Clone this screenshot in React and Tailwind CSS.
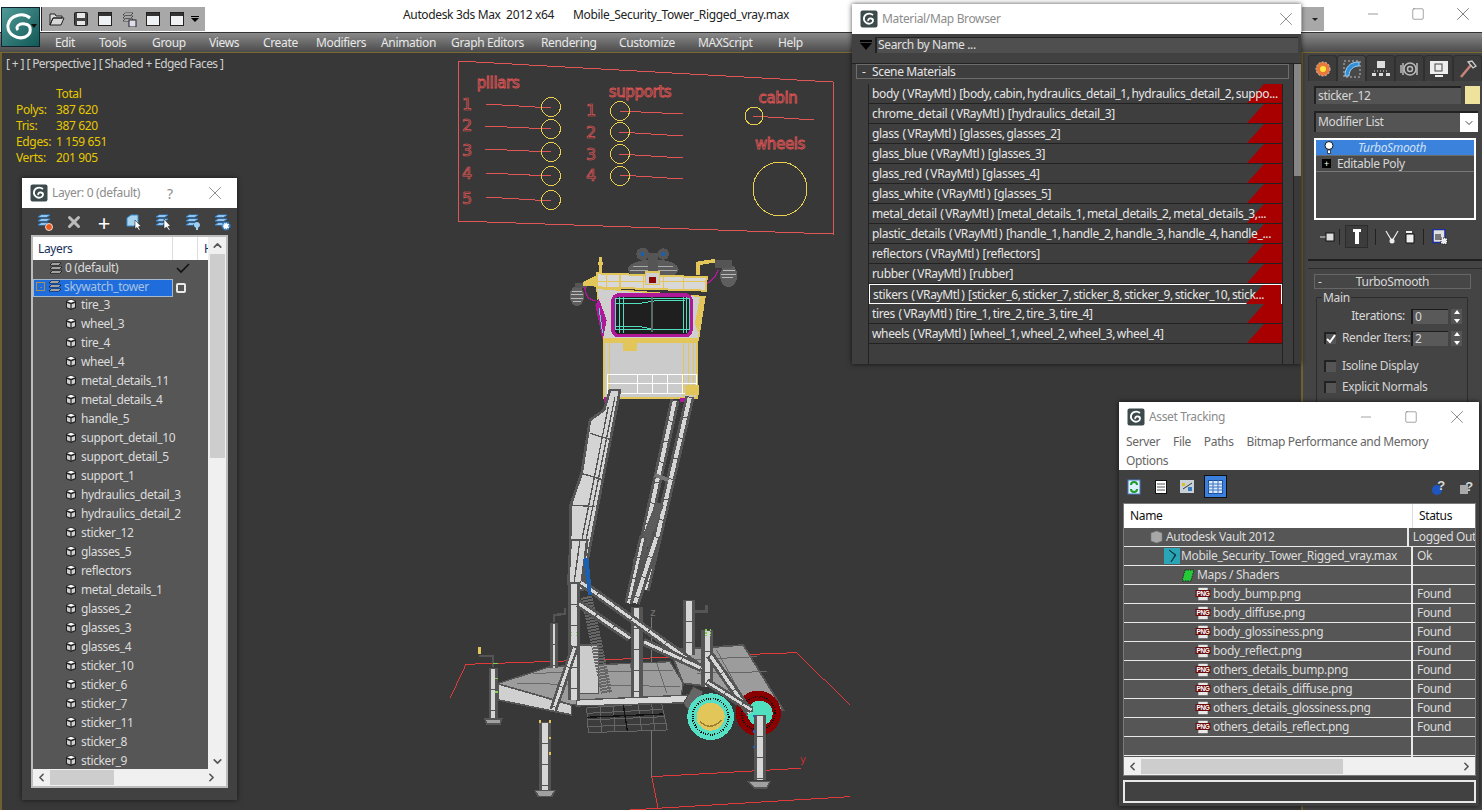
import React from 'react';
import { ChevronDown, ChevronLeft, ChevronRight, ChevronUp, Minus, Square, X } from 'lucide-react';

const menuItems = [
  ['Edit', 'w-[44px]'], ['Tools', 'w-[53px]'], ['Group', 'w-[57px]'], ['Views', 'w-[54px]'], ['Create', 'w-[53px]'], ['Modifiers', 'w-[65px]'],
  ['Animation', 'w-[70px]'], ['Graph Editors', 'w-[90px]'], ['Rendering', 'w-[78px]'], ['Customize', 'w-[79px]'], ['MAXScript', 'w-[80px]'], ['Help', 'w-[40px]'],
];

const layerObjects = [
  'tire_3', 'wheel_3', 'tire_4', 'wheel_4', 'metal_details_11', 'metal_details_4', 'handle_5', 'support_detail_10',
  'support_detail_5', 'support_1', 'hydraulics_detail_3', 'hydraulics_detail_2', 'sticker_12', 'glasses_5', 'reflectors',
  'metal_details_1', 'glasses_2', 'glasses_3', 'glasses_4', 'sticker_10', 'sticker_6', 'sticker_7', 'sticker_11', 'sticker_8', 'sticker_9',
];

const materials = [
  ['body', '[body, cabin, hydraulics_detail_1, hydraulics_detail_2, suppo...'],
  ['chrome_detail', '[hydraulics_detail_3]'],
  ['glass', '[glasses, glasses_2]'],
  ['glass_blue', '[glasses_3]'],
  ['glass_red', '[glasses_4]'],
  ['glass_white', '[glasses_5]'],
  ['metal_detail', '[metal_details_1, metal_details_2, metal_details_3,...'],
  ['plastic_details', '[handle_1, handle_2, handle_3, handle_4, handle_...'],
  ['reflectors', '[reflectors]'],
  ['rubber', '[rubber]'],
  ['stikers', '[sticker_6, sticker_7, sticker_8, sticker_9, sticker_10, stick...'],
  ['tires', '[tire_1, tire_2, tire_3, tire_4]'],
  ['wheels', '[wheel_1, wheel_2, wheel_3, wheel_4]'],
];

const assetFiles = [
  'body_bump.png', 'body_diffuse.png', 'body_glossiness.png', 'body_reflect.png',
  'others_details_bump.png', 'others_details_diffuse.png', 'others_details_glossiness.png', 'others_details_reflect.png',
];

const stats = [['Polys:', '387 620'], ['Tris:', '387 620'], ['Edges:', '1 159 651'], ['Verts:', '201 905']];

const AppIcon = () => (
  <svg width="18" height="18" viewBox="0 0 18 18" className="shrink-0">
    <rect x="0.5" y="0.5" width="17" height="17" rx="2" fill="#3c4a4c" />
    <path d="M13 5C10 2.5 5 3.5 4 7.5C3.2 11.5 7 14.5 10.5 13.5C13.5 12.5 14 9 11 8.5C9 8.2 7.5 9.5 8.5 11" fill="none" stroke="#fff" strokeWidth="1.8" />
  </svg>
);

const CubeIcon = () => (
  <svg width="12" height="13" viewBox="0 0 12 13" className="shrink-0">
    <path d="M1 3L6 1L11 3V10L6 12L1 10Z" fill="#222" />
    <path d="M2 3.2L6 1.8L10 3.2L6 4.8Z" fill="#fff" />
    <path d="M2 5L5.4 6.2V10.6L2 9.3Z M10 5L6.6 6.2V10.6L10 9.3Z" fill="#cfcfcf" />
  </svg>
);

const LayerIcon = ({ className = '' }) => (
  <svg width="14" height="13" viewBox="0 0 14 13" className={`shrink-0 ${className}`}>
    <path d="M3 1H12L10 3H1Z M3 5H13L11 7H1Z M3 9H13L11 11H1Z" fill="#fff" stroke="#111" strokeWidth="0.8" />
  </svg>
);

const BlueLayers = ({ badge }) => (
  <svg width="18" height="18" viewBox="0 0 18 18">
    <path d="M5 2H14L11 4H2Z M5 6H14L11 8H2Z M5 10H12L9 12H2Z" fill="#fff" stroke="#2a86d8" strokeWidth="1" />
    {badge === 'red' && <circle cx="13" cy="14" r="3.5" fill="#e85b20" stroke="#fff" strokeWidth="0.8" />}
    {badge === 'arrow' && <path d="M10 6L10 16L12.5 14L15 17.5L16 16.5L14 13.5L16.5 13Z" fill="#fff" stroke="#111" strokeWidth="0.5" />}
    {badge === 'bulb' && <path d="M13 9a3 3 0 1 1 -0.1 0ZM12 14h2v3h-2Z" fill="#9cd0f4" />}
    {badge === 'gear' && <circle cx="13" cy="13" r="3.5" fill="#fff" stroke="#2a86d8" strokeWidth="2" strokeDasharray="1.5 1" />}
  </svg>
);

const PngIcon = () => (
  <svg width="16" height="14" viewBox="0 0 16 14" className="shrink-0">
    <rect x="3" y="0.5" width="10" height="13" fill="#e8e8e8" stroke="#555" strokeWidth="0.6" />
    <rect x="0.5" y="3" width="15" height="7" fill="#6a0d0d" />
    <text x="8" y="9" textAnchor="middle" fontSize="6.5" fontWeight="700" fill="#fff" fontFamily="Liberation Sans, sans-serif">PNG</text>
  </svg>
);

const ScrollArrow = ({ Icon }) => <Icon size={13} strokeWidth={3} className="text-[#555]" />;

const WindowTitle = ({ title, children }) => (
  <div className="flex h-[30px] shrink-0 items-center bg-white pl-[8px]">
    <AppIcon />
    <span className="ml-[4px] whitespace-nowrap text-[12px] text-[#8c8c8c]">{title}</span>
    {children}
  </div>
);

// Layer explorer window on the left
const LayerWindow = () => (
  <div className="absolute left-[22px] top-[178px] flex h-[622px] w-[215px] flex-col bg-[#414141] shadow-[0_0_5px_rgba(0,0,0,0.6)]">
    <WindowTitle title="Layer: 0 (default)">
      <span className="ml-[27px] text-[14px] text-[#8c8c8c]">?</span>
      <X size={22} strokeWidth={0.9} className="ml-[31px] text-[#777]" />
    </WindowTitle>
    <div className="flex h-[27px] shrink-0 items-center pl-[8px]">
      <span className="flex w-[30px] justify-center"><BlueLayers badge="red" /></span>
      <span className="flex w-[30px] justify-center"><X size={18} strokeWidth={4} className="text-[#bbb]" /></span>
      <span className="flex w-[30px] justify-center text-[22px] leading-none text-white">+</span>
      <span className="flex w-[30px] justify-center">
        <svg width="18" height="18" viewBox="0 0 18 18">
          <path d="M2 5L6 2H13V10L9 13H2Z" fill="#a9d4ef" stroke="#3a8ed0" />
          <path d="M10 7V16L12 14.5L14 17.5L15 16.5L13.5 13.8L16 13.3Z" fill="#fff" stroke="#111" strokeWidth="0.5" />
        </svg>
      </span>
      <span className="flex w-[30px] justify-center"><BlueLayers badge="arrow" /></span>
      <span className="flex w-[30px] justify-center"><BlueLayers badge="bulb" /></span>
      <span className="flex w-[30px] justify-center"><BlueLayers badge="gear" /></span>
    </div>
    <div className="relative mx-[9px] flex h-[553px] flex-col border-2 border-[#bcbcbc] bg-[#f0f0f0]">
      <div className="flex h-[23px] w-[175px] shrink-0 items-center bg-white text-[12px] text-[#16305c]">
        <span className="w-[139px] pl-[5px]">Layers</span>
        <span className="h-full w-[25px] border-l border-[#ddd]" />
        <span className="h-full flex-1 overflow-hidden border-l border-[#ddd] pl-[6px] pt-[3px]">H</span>
      </div>
      <div className="h-[510px] w-[175px] overflow-hidden bg-[#565656] text-[12px] text-[#dcdcdc]">
        <div className="flex h-[16px] items-center">
          <LayerIcon className="ml-[16px]" />
          <span className="ml-[2px] w-[109px]">0 (default)</span>
          <svg width="14" height="12" viewBox="0 0 14 12" className="ml-[2px]"><path d="M1 6L5 10L13 2" fill="none" stroke="#111" strokeWidth="1.6" /></svg>
        </div>
        <div className="flex h-[19px] items-start">
          <div className="mt-[3px] flex h-[18px] w-[140px] shrink-0 items-start border border-[#a8b8cc] bg-[#1f6ddc] leading-[14px] text-[#a6c2e2]">
            <span className="ml-[2px] mt-[2px] flex h-[9px] w-[9px] items-center justify-center border border-[#a88f55] text-[8px] leading-none text-[#a88f55]">-</span>
            <LayerIcon className="ml-[3px]" />
            <span className="ml-[2px]">skywatch_tower</span>
          </div>
          <span className="ml-[3px] mt-[7px] h-[10px] w-[10px] rounded-[2px] border-2 border-[#e8e8e8]" />
        </div>
        {layerObjects.map((name, i) => (
          <div key={i} className="flex h-[19px] items-center pl-[32px]">
            <CubeIcon />
            <span className="ml-[4px]">{name}</span>
          </div>
        ))}
      </div>
      <div className="absolute right-0 top-0 flex h-[533px] w-[18px] flex-col items-center">
        <div className="flex h-[17px] items-center"><ScrollArrow Icon={ChevronUp} /></div>
        <div className="h-[204px] w-[15px] bg-[#cdcdcd]" />
        <div className="mt-auto flex h-[17px] items-center"><ScrollArrow Icon={ChevronDown} /></div>
      </div>
      <div className="flex h-[17px] items-center">
        <div className="flex w-[17px] justify-center"><ScrollArrow Icon={ChevronLeft} /></div>
        <div className="h-[15px] w-[64px] bg-[#cdcdcd]" />
        <div className="ml-auto mr-[1px] flex w-[28px] justify-center"><ScrollArrow Icon={ChevronRight} /></div>
      </div>
    </div>
  </div>
);

const RedCorner = () => (
  <svg width="35" height="19" viewBox="0 0 35 19" className="absolute right-0 top-0">
    <path d="M0 19L17 0H35V19Z" fill="#a80000" />
  </svg>
);

// Material/Map browser window
const MaterialWindow = () => (
  <div className="absolute left-[852px] top-[4px] flex h-[360px] w-[449px] flex-col bg-[#3e3e3e] shadow-[0_0_5px_rgba(0,0,0,0.7)]">
    <WindowTitle title="Material/Map Browser">
      <X size={22} strokeWidth={0.9} className="ml-auto mr-[4px] text-[#777]" />
    </WindowTitle>
    <div className="flex h-[29px] shrink-0 items-start bg-[#414141] pt-[3px] text-[12px] text-[#e0e0e0]">
      <div className="ml-[5px] flex w-[18px] flex-col items-center pt-[3px]">
        <span className="h-[2px] w-[12px] bg-black" />
        <span className="mt-[1px] h-0 w-0 border-x-[6px] border-t-[7px] border-x-transparent border-t-black" />
      </div>
      <div className="h-[16px] w-[423px] border-l-2 border-t border-[#222] bg-[#4f4f4f] pl-[1px] leading-[14px]">Search by Name ...</div>
    </div>
    <div className="relative flex flex-1 flex-col overflow-hidden border-t border-[#222] pl-[4px] text-[12px] text-[#e6e6e6]">
      <div className="flex h-[15px] w-[433px] shrink-0 items-center border border-[#6d6d6d]">
        <span className="ml-[5px] w-[9px]">-</span>
        <span className="ml-[1px]">Scene Materials</span>
      </div>
      <div className="ml-[12px] mt-[5px] flex w-[415px] flex-1 flex-col border-x border-[#222]">
        {materials.map(([name, maps], i) => (
          <div key={name} className={`relative flex h-[20px] shrink-0 items-center whitespace-pre pl-[3px] pt-[1px] [word-spacing:-1px] ${i === 10 ? 'border border-white' : 'border-b border-[#222]'}`}>
            <RedCorner />
            <span className="relative">{name}  ( VRayMtl )  {maps}</span>
          </div>
        ))}
      </div>
      <div className="absolute right-0 top-0 h-full w-[8px] border-l border-[#222] bg-[#3a3a3a]">
        <div className="h-[112px] w-full bg-[#868686]" />
      </div>
    </div>
  </div>
);

// Asset Tracking window, bottom right
const AssetWindow = () => {
  const row = 'flex h-[19px] shrink-0 border-b border-[#e8e8e8] text-[#dcdcdc]';
  const nameCell = 'flex w-[289px] items-center border-r-2 border-[#e8e8e8]';
  return (
    <div className="absolute left-[1119px] top-[402px] flex h-[404px] w-[360px] flex-col bg-[#404040] shadow-[0_0_5px_rgba(0,0,0,0.7)]">
      <div className="h-[68px] shrink-0 bg-white">
        <WindowTitle title="Asset Tracking">
          <Minus size={16} strokeWidth={1} className="ml-[133px] text-[#777]" />
          <Square size={14} strokeWidth={1} className="ml-[30px] text-[#666]" />
          <X size={22} strokeWidth={0.9} className="ml-[28px] text-[#777]" />
        </WindowTitle>
        <div className="flex gap-[13px] pl-[7px] text-[12px] leading-[19px] text-[#666]">
          <span>Server</span><span>File</span><span>Paths</span><span>Bitmap Performance and Memory</span>
        </div>
        <div className="pl-[7px] text-[12px] leading-[19px] text-[#666]">Options</div>
      </div>
      <div className="flex h-[33px] shrink-0 items-center pl-[8px]">
        <svg width="14" height="16" viewBox="0 0 14 16"><rect x="1" y="1" width="12" height="14" fill="#dff0ff" stroke="#4b78c8" /><path d="M4 6A3 3 0 0 1 10 6M10 10A3 3 0 0 1 4 10" fill="none" stroke="#1c9c2a" strokeWidth="2" /></svg>
        <svg width="12" height="14" viewBox="0 0 12 14" className="ml-[14px]"><rect x="0.5" y="0.5" width="11" height="13" fill="#fff" stroke="#111" /><path d="M2 4H10M2 7H10M2 10H10" stroke="#555" /></svg>
        <svg width="14" height="13" viewBox="0 0 14 13" className="ml-[13px]"><rect width="14" height="13" fill="#c8d0d8" /><path d="M2 3H5V6H2Z" fill="#d8c020" /><path d="M8 7H12V11H8Z" fill="#3a7ac0" /><path d="M3 9L12 3" stroke="#333" /></svg>
        <div className="ml-[10px] flex h-[23px] w-[23px] items-center justify-center border border-[#111] bg-[#3a80dc]">
          <svg width="15" height="14" viewBox="0 0 15 14"><rect x="0.5" y="0.5" width="14" height="13" fill="#dcebfb" stroke="#1b4c9c" /><path d="M0 4H15M0 7H15M0 10H15M5 0V14M10 0V14" stroke="#3a70c0" /></svg>
        </div>
        <svg width="16" height="16" viewBox="0 0 16 16" className="ml-[204px]"><circle cx="6" cy="11" r="5" fill="#1f55c0" /><text x="10" y="11" fontSize="13" fontWeight="700" fill="#d8d8d8" fontFamily="Liberation Sans, sans-serif" textAnchor="middle">?</text></svg>
        <svg width="16" height="16" viewBox="0 0 16 16" className="ml-[12px]"><rect x="1" y="6" width="8" height="9" fill="#aaa" /><text x="10" y="12" fontSize="13" fontWeight="700" fill="#d8d8d8" fontFamily="Liberation Sans, sans-serif" textAnchor="middle">?</text></svg>
      </div>
      <div className="mx-[4px] flex h-[273px] w-[353px] flex-col overflow-hidden border border-[#7a7a7a] bg-[#565656] text-[12px]">
        <div className="flex h-[24px] shrink-0 items-center bg-white text-[#111]">
          <span className="w-[289px] border-r border-[#ddd] pl-[6px] leading-[24px]">Name</span>
          <span className="pl-[6px]">Status</span>
        </div>
        <div className="flex-1 overflow-hidden">
          <div className={row}>
            <div className={`${nameCell} pl-[26px]`}>
              <svg width="13" height="14" viewBox="0 0 13 14" className="shrink-0"><path d="M1 3L6.5 1L12 3V11L6.5 13L1 11Z" fill="#a8a8a8" stroke="#777" strokeWidth="0.6" /></svg>
              <span className="ml-[3px]">Autodesk Vault 2012</span>
            </div>
            <span className="overflow-hidden whitespace-nowrap pl-[4px] leading-[18px]">Logged Out</span>
          </div>
          <div className={row}>
            <div className={`${nameCell} pl-[40px]`}>
              <svg width="16" height="16" viewBox="0 0 16 16" className="shrink-0"><rect width="16" height="16" fill="#2aa5b5" /><path d="M5 2L12 7L7 14L11 7Z" fill="#0e3a44" stroke="#0e3a44" /></svg>
              <span className="ml-[1px]">Mobile_Security_Tower_Rigged_vray.max</span>
            </div>
            <span className="pl-[4px] leading-[18px]">Ok</span>
          </div>
          <div className={row}>
            <div className={`${nameCell} pl-[58px]`}>
              <svg width="12" height="13" viewBox="0 0 12 13" className="shrink-0"><path d="M3 1H12L9 12H0Z" fill="#25c93a" stroke="#111" strokeWidth="0.8" strokeDasharray="1.5 1" /></svg>
              <span className="ml-[3px]">Maps / Shaders</span>
            </div>
          </div>
          {assetFiles.map((name) => (
            <div key={name} className={row}>
              <div className={`${nameCell} pl-[71px]`}>
                <PngIcon />
                <span className="ml-[2px]">{name}</span>
              </div>
              <span className="pl-[4px] leading-[18px]">Found</span>
            </div>
          ))}
          <div className={row}><div className={nameCell} /></div>
          <div className="flex h-[4px]"><div className={nameCell} /></div>
        </div>
        <div className="flex h-[18px] shrink-0 items-center bg-[#f0f0f0]">
          <div className="flex w-[17px] justify-center"><ScrollArrow Icon={ChevronLeft} /></div>
          <div className="h-[15px] w-[202px] bg-[#cdcdcd]" />
          <div className="ml-auto flex w-[17px] justify-center"><ScrollArrow Icon={ChevronRight} /></div>
        </div>
      </div>
      <div className="mx-[4px] mt-[4px] h-[23px] w-[353px] border-2 border-[#e8e8e8] bg-[#414141]" />
    </div>
  );
};

const Spinner = ({ value }) => (
  <div className="flex items-center">
    <div className="h-[15px] w-[37px] border-l-2 border-t border-[#1c1c1c] bg-[#595959] pl-[2px] text-[12px] leading-[14px]">{value}</div>
    <div className="ml-[3px] flex h-[15px] w-[11px] flex-col items-center justify-between bg-[#555] py-[1px]">
      <span className="h-0 w-0 border-x-[3px] border-b-[4px] border-x-transparent border-b-white" />
      <span className="h-0 w-0 border-x-[3px] border-t-[4px] border-x-transparent border-t-white" />
    </div>
  </div>
);

const PanelCheck = ({ label, checked }) => (
  <div className="flex items-center whitespace-nowrap text-[12px] text-[#d4d4d4]">
    <span className="flex h-[12px] w-[12px] items-center justify-center border-l-2 border-t-2 border-[#222] bg-[#555]">
      {checked && <svg width="10" height="10" viewBox="0 0 10 10"><path d="M1 5L4 8L9 1" fill="none" stroke="#fff" strokeWidth="2" /></svg>}
    </span>
    <span className="ml-[6px]">{label}</span>
  </div>
);

const TabIcon = ({ children, active }) => (
  <div className={`flex h-[26px] w-[29px] items-center justify-center rounded-t-[3px] border-x border-t border-[#303030] ${active ? 'bg-[#484848]' : 'bg-[#3c3c3c]'}`}>{children}</div>
);

// Right side command panel
const CommandPanel = () => (
  <div className="flex w-[179px] shrink-0 flex-col bg-[#444] pl-[5px] pt-[2px] text-[12px] text-[#d8d8d8]">
    <div className="flex h-[26px] shrink-0">
      <TabIcon>
        <svg width="18" height="18" viewBox="0 0 18 18"><circle cx="9" cy="9" r="7" fill="#e8783c" stroke="#c9c9c9" strokeDasharray="2 1.5" /><circle cx="9" cy="9" r="3" fill="#ffe640" /></svg>
      </TabIcon>
      <TabIcon active>
        <svg width="20" height="20" viewBox="0 0 20 20"><rect x="2" y="2" width="16" height="16" fill="none" stroke="#bbb" strokeDasharray="2 2" /><path d="M3 17C3 8 8 3 17 3V7C11 7 7 11 7 17Z" fill="#2f8fd8" stroke="#9fd0f2" /></svg>
      </TabIcon>
      <TabIcon>
        <svg width="20" height="18" viewBox="0 0 20 18"><rect x="6" y="1" width="8" height="7" fill="#ddd" /><path d="M1 13H5V16H1Z M8 13H12V16H8Z M15 13H19V16H15Z" fill="#ddd" /><path d="M3 11H17" stroke="#ddd" strokeDasharray="1 2" /></svg>
      </TabIcon>
      <TabIcon>
        <svg width="20" height="18" viewBox="0 0 20 18" fill="none" stroke="#bbb"><circle cx="10" cy="9" r="6" strokeWidth="1.5" /><circle cx="10" cy="9" r="2.5" strokeWidth="1.5" /><path d="M3 3V15M1 5V13M17 3V15" strokeWidth="1.5" /></svg>
      </TabIcon>
      <TabIcon>
        <svg width="20" height="18" viewBox="0 0 20 18"><rect x="1" y="1" width="18" height="13" fill="#eee" /><rect x="6" y="4" width="7" height="7" fill="none" stroke="#444" /><path d="M6 16H14" stroke="#eee" strokeWidth="2" /></svg>
      </TabIcon>
      <TabIcon>
        <svg width="20" height="20" viewBox="0 0 20 20"><path d="M3 18L13 6" stroke="#c8837a" strokeWidth="2.5" /><path d="M10 3L14 2L18 7L15 9Z" fill="none" stroke="#ccc" strokeWidth="1.3" /></svg>
      </TabIcon>
    </div>
    <div className="mt-[5px] flex h-[18px] shrink-0 pl-[6px]">
      <div className="w-[147px] border-l-2 border-t-2 border-[#222] bg-[#545454] pl-[2px] leading-[15px]">sticker_12</div>
      <div className="ml-[4px] w-[15px] bg-[#efe29c]" />
    </div>
    <div className="ml-[6px] mt-[7px] flex h-[21px] w-[164px] shrink-0 border-l-2 border-t-2 border-[#222] bg-[#545454]">
      <span className="flex-1 pl-[2px] leading-[18px]">Modifier List</span>
      <span className="flex w-[18px] items-center justify-center bg-white"><ChevronDown size={12} className="text-[#444]" /></span>
    </div>
    <div className="ml-[6px] mt-[6px] h-[82px] w-[162px] shrink-0 border-2 border-white bg-[#4a4a4a]">
      <div className="flex h-[16px] items-center border-b border-[#6a6a6a] bg-[#3b82dc] pl-[8px]">
        <svg width="10" height="13" viewBox="0 0 10 13"><circle cx="5" cy="4.5" r="4" fill="#fff" stroke="#111" /><path d="M3.5 9H6.5V12.5H3.5Z" fill="#fff" stroke="#111" strokeWidth="0.7" /></svg>
        <span className="ml-[24px] italic text-[#cfe0f4]">TurboSmooth</span>
      </div>
      <div className="flex h-[16px] items-center border-b border-[#777] pl-[6px]">
        <span className="flex h-[9px] w-[9px] items-center justify-center bg-black text-[9px] leading-none text-white">+</span>
        <span className="ml-[6px]">Editable Poly</span>
      </div>
    </div>
    <div className="mt-[5px] flex h-[23px] shrink-0 items-center pl-[12px]">
      <svg width="16" height="12" viewBox="0 0 16 12"><path d="M0 6H6" stroke="#ddd" /><rect x="6" y="2" width="8" height="8" fill="#ddd" stroke="#111" /></svg>
      <span className="ml-[3px] h-[16px] w-px bg-[#222]" />
      <div className="ml-[5px] flex h-[23px] w-[23px] items-center justify-center border border-[#2c2c2c] bg-[#3c3c3c]">
        <svg width="8" height="16" viewBox="0 0 8 16"><path d="M0 0H8V3H6V15H2V3H0Z" fill="#fff" /></svg>
      </div>
      <span className="ml-[7px] h-[16px] w-px bg-[#222]" />
      <svg width="14" height="14" viewBox="0 0 14 14" className="ml-[9px]"><path d="M1 1L7 11L13 1" fill="none" stroke="#eee" strokeWidth="1.2" /><circle cx="7" cy="11" r="2.5" fill="#eee" /></svg>
      <svg width="10" height="14" viewBox="0 0 10 14" className="ml-[6px]"><path d="M1 4H9V13H1Z" fill="#eee" stroke="#111" /><path d="M1 2H7" stroke="#eee" strokeWidth="2" /></svg>
      <span className="ml-[8px] h-[16px] w-px bg-[#222]" />
      <svg width="16" height="16" viewBox="0 0 16 16" className="ml-[8px]"><rect x="1" y="0.5" width="12" height="13" fill="#e0e0e0" stroke="#1b2f9c" strokeWidth="1.5" /><path d="M3 5H9V11H3Z" fill="#777" /><path d="M9 9H15V15H9Z" fill="#eee" stroke="#222" strokeDasharray="1 1" /></svg>
    </div>
    <div className="mt-[11px] h-[2px] shrink-0 bg-[#1f1f1f]" />
    <div className="mt-[7px] h-px shrink-0 bg-[#2c2c2c]" />
    <div className="relative ml-[6px] mt-[5px] flex h-[15px] w-[157px] shrink-0 items-center justify-center border border-[#666] bg-[#464646]">
      <span className="absolute left-[3px]">-</span>
      <span>TurboSmooth</span>
    </div>
    <div className="ml-[8px] mt-[8px] h-[110px] w-[152px] rounded-[1px] border border-[#2c2c2c]">
      <span className="relative -top-[7px] ml-[5px] block w-fit bg-[#444] px-[1px] leading-[14px]">Main</span>
      <div className="-mt-[4px] flex h-[16px] items-center justify-end pr-[5px]">
        <span className="mr-[6px]">Iterations:</span>
        <Spinner value="0" />
      </div>
      <div className="mt-[6px] flex h-[16px] items-center pl-[7px] pr-[5px]">
        <PanelCheck label="Render Iters:" checked />
        <div className="ml-auto"><Spinner value="2" /></div>
      </div>
      <div className="mt-[11px] pl-[7px]"><PanelCheck label="Isoline Display" /></div>
      <div className="mt-[3px] pl-[7px]"><PanelCheck label="Explicit Normals" /></div>
    </div>
  </div>
);

// A structural tube: dark outline with a lighter core
const Beam = ({ d, w = 36, core = 16 }) => (
  <g>
    <path d={d} fill="none" stroke="#555" strokeWidth={w} />
    <path d={d} fill="none" stroke="#d6d6d6" strokeWidth={core} />
    <path d={d} fill="none" stroke="#555" strokeWidth={core} strokeDasharray="3 60" />
  </g>
);

const SignNumbers = ({ list, x }) => list.map(([n, y]) => (
  <text key={n} x={x} y={y} fontSize="16" fill="none" stroke="#e05555" strokeWidth="0.7" textAnchor="middle" fontFamily="DejaVu Sans, sans-serif">{n}</text>
));

// Everything inside the perspective viewport; viewBox uses page coordinates
const ViewportDrawing = () => (
  <svg className="absolute left-0 top-0" width="1300" height="757" viewBox="2 53 1300 757" shapeRendering="crispEdges">
    <g stroke="#e05555" fill="none">
      <path d="M458 61L833 82V234L458 221Z" />
      <path d="M486 104L551 108M485 126L551 129M485 149L551 152M486 173L551 176M486 197L551 201M620 111L683 114M619 132L683 136M619 154L683 158M620 175L683 179M753 116L814 120" />
    </g>
    <g fontFamily="DejaVu Sans, sans-serif" fontSize="15" fill="none" stroke="#e05555" strokeWidth="0.8" textAnchor="middle">
      <text x="498" y="88">pillars</text>
      <text x="640" y="97">supports</text>
      <text x="778" y="103">cabin</text>
      <text x="780" y="149">wheels</text>
    </g>
    <SignNumbers x={467} list={[['1', 110], ['2', 131], ['3', 156], ['4', 179], ['5', 204]]} />
    <SignNumbers x={591} list={[['1', 116], ['2', 138], ['3', 160], ['4', 181]]} />
    <g fill="none" stroke="#e8cf50" strokeWidth="1">
      {[107, 129, 152, 176, 200].map((y) => <circle key={y} cx="551" cy={y} r="9.5" />)}
      {[111, 132, 154, 176].map((y) => <circle key={y} cx="620" cy={y} r="9.5" />)}
      <circle cx="754" cy="116" r="9" />
      <circle cx="780" cy="189" r="27" />
    </g>

    {/* cabin, numbers follow a 3x crop from 450,240 */}
    <g transform="translate(450 240) scale(0.3333)">
      <ellipse cx="610" cy="88" rx="76" ry="30" fill="#5b5b5b" />
      <path d="M540 92H680M550 80H670" stroke="#aaa" strokeWidth="3" />
      <rect x="595" y="40" width="30" height="60" fill="#555" />
      <circle cx="578" cy="42" r="19" fill="#555" /><circle cx="578" cy="42" r="6" fill="#1a5fb0" />
      <circle cx="640" cy="42" r="17" fill="#555" /><circle cx="640" cy="42" r="6" fill="#1a5fb0" />
      <ellipse cx="381" cy="168" rx="22" ry="30" fill="#5e5e5e" />
      <path d="M365 155H397M362 165H400M364 175H398M370 185H392" stroke="#bbb" strokeWidth="3" />
      <path d="M375 130H410V145H375Z" fill="#555" />
      <ellipse cx="836" cy="107" rx="26" ry="34" fill="#5e5e5e" />
      <path d="M818 92H854M814 104H858M816 114H850" stroke="#bbb" strokeWidth="3" />
      <path d="M795 60H845V85H795Z" fill="#555" />
      <path d="M405 140Q405 180 437 182M730 125Q780 150 805 90" fill="none" stroke="#b0189a" strokeWidth="4" />
      <path d="M440 145L765 170L745 300L460 300Z" fill="#cfcfcf" stroke="#e3c65a" strokeWidth="4" />
      <path d="M440 100L770 112L768 152L440 142Z" fill="#d8d8d8" stroke="#e3c65a" strokeWidth="6" />
      <path d="M470 105V140M510 105V142M580 108V145M640 110V148M700 112V150M445 125H765" stroke="#e3c65a" strokeWidth="4" />
      <path d="M400 125L440 105V140L400 138Z" fill="#e3c65a" />
      <path d="M451 50V100M443 70H459" stroke="#e3c65a" strokeWidth="9" />
      <path d="M745 105V70L795 62" fill="none" stroke="#e3c65a" strokeWidth="11" />
      <rect x="587" y="96" width="42" height="38" fill="#cfcfcf" stroke="#e3c65a" strokeWidth="5" />
      <rect x="597" y="112" width="20" height="18" fill="#8a0a0a" />
      <path d="M436 195L458 300L470 240L446 175Z" fill="#b0189a" />
      <path d="M765 170L745 280L735 250L750 170Z" fill="#e3c65a" />
      <path d="M447 205L458 280" stroke="#50e0c0" strokeWidth="3" />
      <rect x="489" y="165" width="234" height="122" rx="18" fill="#1f1f1f" stroke="#b0189a" strokeWidth="11" />
      <path d="M497 175H718V270H497ZM510 172V278M520 172V278M700 172V278M710 172V278M497 190H570L612 183H705M497 260H570L612 268H718" fill="none" stroke="#50e0c0" strokeWidth="3" />
      <path d="M605 172V275" stroke="#596b66" strokeWidth="6" />
      <rect x="462" y="298" width="280" height="176" fill="#cbcbcb" stroke="#e3c65a" strokeWidth="7" />
      <path d="M462 303H742" stroke="#e3c65a" strokeWidth="10" />
      <path d="M478 310V470M700 310V470M716 310V470M732 310V470" stroke="#e3c65a" strokeWidth="3" />
      <path d="M472 403H740V461H472ZM472 432H740M563 403V461M607 403V461M653 403V461M697 403V461" fill="none" stroke="#fff" strokeWidth="3" />
      <rect x="520" y="307" width="42" height="27" fill="#e3c65a" />
      <rect x="705" y="435" width="42" height="30" fill="#e3c65a" />
      <rect x="462" y="470" width="20" height="18" fill="#b0189a" />
      <rect x="690" y="475" width="14" height="12" fill="#b0189a" />
    </g>

    {/* boom arms, 3x crop from 540,390 */}
    <g transform="translate(540 390) scale(0.3333)">
      <path d="M150 90L192 60L210 0L240 0L150 470L128 600H88L92 345L125 250Z" fill="#d4d4d4" stroke="#555" strokeWidth="8" />
      <path d="M225 20L110 590M205 50L98 590M125 250L190 270M92 345L165 350M92 460L140 465M150 130L215 150" fill="none" stroke="#555" strokeWidth="4" />
      <Beam d="M405 30L280 600" w={28} core={12} />
      <Beam d="M450 20L315 600" w={28} core={12} />
      <path d="M345 255L385 270" stroke="#777" strokeWidth="12" />
      <path d="M360 340L290 520" stroke="#5b5b5b" strokeWidth="26" />
      <path d="M140 505L150 600" stroke="#1a5fb0" strokeWidth="10" />
    </g>

    {/* base and floor grid, 3x crop from 450,540 */}
    <g transform="translate(450 540) scale(0.3333)">
      <path d="M0 475L48 373L520 357L1040 338L1200 495M605 710L1052 685M605 710L625 808M540 810L1200 770" fill="none" stroke="#e03a3a" strokeWidth="3" />
      <path d="M605 230V710" stroke="#777" strokeWidth="3" />
      <text x="601" y="228" fontSize="30" fill="#777" fontFamily="DejaVu Sans, sans-serif">z</text>
      <text x="1050" y="668" fontSize="30" fill="#c83030" fontFamily="DejaVu Sans, sans-serif">y</text>

      <path d="M410 503L635 490L652 570L415 578Z" fill="#3c3c3c" stroke="#666" strokeWidth="3" />
      <path d="M412 520L640 508M412 540L645 530M414 560L650 550M450 500L455 578M490 498L495 576M565 494L575 573M605 492L615 572" stroke="#666" strokeWidth="3" />
      <path d="M410 532L640 522M520 495L532 572" stroke="#111" strokeWidth="4" fill="none" />

      <path d="M145 430L300 380L660 365L700 430L690 488L380 495L145 470Z" fill="#9c9c9c" stroke="#555" strokeWidth="4" />
      <path d="M200 430L690 440M250 400L670 390M460 370L480 460M540 368L560 470M620 368L650 460" stroke="#6a6a6a" strokeWidth="3" fill="none" />
      <path d="M145 432L365 495V525L145 480Z" fill="#d0d0d0" stroke="#555" strokeWidth="5" />
      <path d="M380 480L720 465V488L380 498Z" fill="#d8d8d8" stroke="#555" strokeWidth="4" />
      <path d="M660 330L880 315L1000 510L900 520L780 440L700 430Z" fill="#9c9c9c" stroke="#555" strokeWidth="5" />
      <path d="M700 360L920 350M740 400L950 395M800 330L860 440" stroke="#666" strokeWidth="3" fill="none" />

      <path d="M385 315H445V460H385Z" fill="#cccccc" stroke="#555" strokeWidth="4" />
      <path d="M410 170L470 460" stroke="#666" strokeWidth="34" strokeDasharray="6 3" />

      <circle cx="925" cy="520" r="68" fill="#8a0000" />
      <circle cx="925" cy="520" r="50" fill="none" stroke="#111" strokeWidth="5" strokeDasharray="3 4" />
      <circle cx="930" cy="520" r="38" fill="#50e0c0" />
      <path d="M700 490L730 440L760 455L725 525Z" fill="#666" stroke="#444" strokeWidth="3" />
      <circle cx="782" cy="530" r="70" fill="#55e0c5" />
      <circle cx="782" cy="530" r="54" fill="none" stroke="#111" strokeWidth="6" strokeDasharray="3 4" />
      <circle cx="782" cy="530" r="42" fill="#e3c65a" />
      <path d="M750 545Q782 575 815 540" fill="none" stroke="#9a8030" strokeWidth="4" />

      {/* boom runs down into the base */}
      <path d="M362 0H412L395 130H355Z" fill="#d4d4d4" stroke="#555" strokeWidth="8" />
      <path d="M390 0L372 130" stroke="#555" strokeWidth="4" />
      <Beam d="M620 -10L555 190" w={30} core={12} />
      <Beam d="M580 -10L535 190" w={24} core={8} />

      <Beam d="M372 130V480" />
      <Beam d="M560 200V472" />
      <Beam d="M772 270V440" />
      <Beam d="M717 180V345" />
      <Beam d="M130 385V540" w={28} core={12} />
      <Beam d="M312 250V385" w={24} core={8} />
      <Beam d="M285 545V752" />
      <Beam d="M930 525V720" />
      <Beam d="M390 125L745 380" w={24} core={9} />
      <Beam d="M385 190L540 295" w={24} core={9} />
      <Beam d="M580 305L755 385" w={24} core={9} />
      <Beam d="M780 345L900 520" w={26} core={10} />
      <Beam d="M770 425L905 510" w={22} core={8} />
      <Beam d="M375 320L310 510" w={24} core={9} />
      <path d="M105 537H155L150 552H110Z M255 752H315L305 770H265Z M895 725H960L950 745H915Z" fill="#a0a0a0" stroke="#555" strokeWidth="5" />
      <path d="M88 348H130V380M312 245V225L345 222V205M735 215H770V195" fill="none" stroke="#555" strokeWidth="7" />
      <rect x="84" y="322" width="8" height="20" fill="#e3c65a" />
      <path d="M405 55L420 165" stroke="#1a5fb0" strokeWidth="11" />
      <path d="M365 275V295M380 275V295M768 268V288M782 268V288" stroke="#7fd04a" strokeWidth="5" strokeDasharray="5 4" />
      <path d="M270 540V550M300 540V550M300 590V598M300 637V645" stroke="#e3c65a" strokeWidth="6" />
      <path d="M912 525V532M912 570V578M912 618V625" stroke="#2060c0" strokeWidth="6" />
      <path d="M130 370H145M135 415H145M135 456H145" stroke="#7fd04a" strokeWidth="4" />
    </g>
  </svg>
);

const StatsOverlay = () => (
  <div className="absolute left-[14px] top-[33px] grid grid-cols-[40px_auto] text-[12px] leading-[16px] text-[#e6c800]">
    <span />
    <span>Total</span>
    {stats.map(([label, value]) => (
      <React.Fragment key={label}>
        <span>{label}</span>
        <span>{value}</span>
      </React.Fragment>
    ))}
  </div>
);

const App = () => {
  const qatIcons = [
    <svg key="o" width="16" height="14" viewBox="0 0 16 14"><path d="M1 2H6L7 4H13V6H4L1 13L4 6H15L12 13H1Z" fill="#d8d8d8" stroke="#222" /></svg>,
    <svg key="s" width="14" height="14" viewBox="0 0 14 14"><rect x="0.5" y="0.5" width="13" height="13" rx="1" fill="#444" stroke="#222" /><rect x="3" y="1" width="8" height="5" fill="#e8e8e8" /><rect x="3" y="9" width="8" height="4" fill="#e8e8e8" /></svg>,
    <svg key="a" width="14" height="14" viewBox="0 0 14 14"><rect x="0.5" y="0.5" width="13" height="13" fill="#eef2f5" stroke="#222" /><rect x="1" y="1" width="12" height="3" fill="#333" /></svg>,
    <svg key="b" width="15" height="15" viewBox="0 0 15 15"><path d="M3 1H11L9 3H1Z M3 4H11L9 6H1Z M3 7H11L9 9H1Z" fill="#eee" stroke="#222" strokeWidth="0.7" /><rect x="7" y="8" width="7" height="7" fill="#dde" stroke="#222" /></svg>,
    <svg key="c" width="14" height="14" viewBox="0 0 14 14"><rect x="0.5" y="0.5" width="13" height="13" fill="#eef2f5" stroke="#222" /><rect x="1" y="1" width="12" height="3" fill="#333" /></svg>,
    <svg key="d" width="14" height="14" viewBox="0 0 14 14"><rect x="0.5" y="0.5" width="13" height="13" fill="#eef2f5" stroke="#222" /><rect x="1" y="1" width="12" height="3" fill="#333" /></svg>,
  ];

  return (
    <div className="relative flex h-[810px] w-[1482px] flex-col overflow-hidden bg-[#383838] font-['Noto_Sans',sans-serif] tracking-[-0.35px]">
      <div className="flex h-[32px] shrink-0 bg-white">
        <div className="ml-[41px] mt-[7px] flex h-[24px] w-[164px] items-center border-l border-[#222] bg-[#a8a8a8] pl-[3px]">
          {qatIcons.map((icon, i) => <span key={i} className="flex w-[24px] justify-center">{icon}</span>)}
          <span className="ml-[2px] flex flex-col items-center">
            <span className="h-[1px] w-[8px] bg-black" />
            <span className="mt-[1px] h-0 w-0 border-x-[4px] border-t-[4px] border-x-transparent border-t-black" />
          </span>
        </div>
        <span className="ml-[198px] whitespace-pre pt-[7px] text-[12px] leading-[16px] text-[#222]">Autodesk 3ds Max  2012 x64</span>
        <span className="ml-[19px] pt-[7px] text-[12px] leading-[16px] text-[#222]">Mobile_Security_Tower_Rigged_vray.max</span>
        <div className="ml-auto flex items-start">
          <div className="mt-[7px] flex h-[24px] w-[22px] items-center justify-end bg-[#a8a8a8] pr-[6px]">
            <span className="h-0 w-0 border-x-[3px] border-t-[3px] border-x-transparent border-t-[#222]" />
          </div>
          <Minus size={16} strokeWidth={1} className="ml-[41px] mt-[6px] text-[#666]" />
          <Square size={14} strokeWidth={1} className="ml-[30px] mt-[7px] text-[#666]" />
          <X size={22} strokeWidth={0.9} className="ml-[27px] mr-[8px] mt-[3px] text-[#666]" />
        </div>
      </div>
      <div className="flex h-[20px] shrink-0 items-center border-t border-[#333] bg-gradient-to-b from-[#8a8a8a] to-[#4c4c4c] pl-[55px] text-[12px] text-[#e8e8e8]">
        {menuItems.map(([item, width]) => <span key={item} className={`shrink-0 ${width}`}>{item}</span>)}
      </div>
      <div className="h-[1px] shrink-0 bg-[#7a6a2f]" />
      <div className="flex min-h-0 flex-1">
        <div className="relative flex-1 border-x-2 border-[#6e6030] bg-[#383838]">
          <ViewportDrawing />
          <div className="absolute left-[4px] top-[3px] text-[12px] leading-[16px] tracking-[-0.62px] text-[#cfcfcf]">[ + ] [ Perspective ] [ Shaded + Edged Faces ]</div>
          <StatsOverlay />
        </div>
        <CommandPanel />
      </div>
      <div className="absolute left-[1px] top-[7px] flex h-[40px] w-[39px] items-center justify-center border border-[#123] bg-gradient-to-br from-[#4f9a98] to-[#0f5a56]">
        <svg width="32" height="30" viewBox="0 0 32 30">
          <path d="M25 6C18 0 5 3 3 13C2 22 12 28 20 25C27 22 27 13 20 12C14 11 10 15 13 18" fill="none" stroke="#fff" strokeWidth="3" />
          <path d="M26 12H32L29 16Z" fill="#111" />
        </svg>
      </div>
      <LayerWindow />
      <MaterialWindow />
      <AssetWindow />
    </div>
  );
};

export default App;
